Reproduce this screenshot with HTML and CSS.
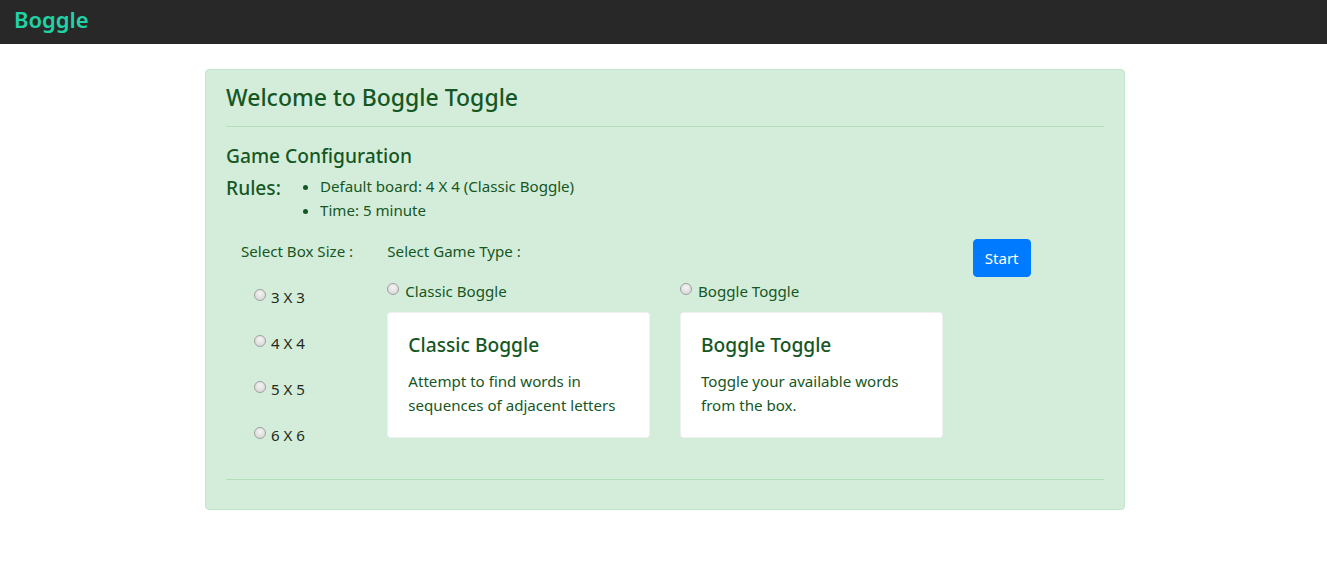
FILE: index.html
```html
<!DOCTYPE html>
<html>
<head>
<meta charset="utf-8">
<title>Boggle</title>
<link rel="stylesheet" href="styles.css">
</head>
<body>
<nav class="navbar"><span class="brand">Boggle</span></nav>
<main class="page">
  <section class="alert">
    <h4 class="title">Welcome to Boggle Toggle</h4>
    <hr class="rule">
    <h5 class="subtitle">Game Configuration</h5>
    <div class="rules">
      <h5 class="rules-label">Rules:</h5>
      <ul class="rules-list">
        <li>Default board: 4 X 4 (Classic Boggle)</li>
        <li>Time: 5 minute</li>
      </ul>
    </div>
    <div class="config">
      <div class="col">
        <div class="col-label">Select Box Size :</div>
        <label class="size"><input type="radio" name="size" class="radio"><span>3 X 3</span></label>
        <label class="size"><input type="radio" name="size" class="radio"><span>4 X 4</span></label>
        <label class="size"><input type="radio" name="size" class="radio"><span>5 X 5</span></label>
        <label class="size"><input type="radio" name="size" class="radio"><span>6 X 6</span></label>
      </div>
      <div class="col">
        <div class="col-label">Select Game Type :</div>
        <label class="type"><input type="radio" name="type" class="radio"><span>Classic Boggle</span></label>
        <div class="card">
          <h5 class="card-title">Classic Boggle</h5>
          <p class="card-text">Attempt to find words in sequences of adjacent letters</p>
        </div>
      </div>
      <div class="col">
        <div class="col-label"></div>
        <label class="type"><input type="radio" name="type" class="radio"><span>Boggle Toggle</span></label>
        <div class="card">
          <h5 class="card-title">Boggle Toggle</h5>
          <p class="card-text">Toggle your available words from the box.</p>
        </div>
      </div>
      <div class="col">
        <button class="btn">Start</button>
      </div>
    </div>
    <hr class="rule rule-bottom">
  </section>
</main>
</body>
</html>
```
FILE: styles.css
```css
* { box-sizing: border-box; }
body {
  margin: 0;
  font-family: "Noto Sans", "Open Sans", sans-serif;
  font-size: 15.1px;
  line-height: 24px;
  color: #212529;
  background: #fff;
}
.navbar {
  height: 44px;
  background: #282828;
  display: flex;
  align-items: center;
  padding: 0 14px;
}
.brand {
  font-size: 22px;
  font-weight: 600;
  color: #1fd3a6;
  line-height: 30px;
  margin-top: -6px;
}
.page {
  display: flex;
  justify-content: center;
  padding-top: 25px;
}
.alert {
  width: 920px;
  margin-left: 3px;
  background: #d4edda;
  border: 1px solid #c3e6cb;
  border-radius: 4px;
  color: #155724;
  padding: 13px 20px 13px;
}
.title {
  margin: 0;
  font-size: 23px;
  font-weight: 500;
  line-height: 29px;
}
.rule {
  border: 0;
  border-top: 1px solid #b1dfbb;
  margin: 14px 0 17px;
}
.subtitle {
  margin: 0;
  font-size: 19.2px;
  font-weight: 500;
  line-height: 24px;
}
.rules {
  display: flex;
  align-items: flex-start;
  margin-top: 8px;
}
.rules-label {
  margin: 0;
  font-size: 19.2px;
  font-weight: 500;
  line-height: 24px;
  width: 54px;
}
.rules-list {
  margin: -2px 0 17px;
  padding-left: 40px;
}
.rules-list li { line-height: 24px; }
.config {
  display: grid;
  grid-template-columns: 146.33px 292.67px 292.67px 146.33px;
}
.col { padding: 0 15px; display: flex; flex-direction: column; align-items: flex-start; }
.col-label { height: 24px; }
.size {
  display: flex;
  align-items: center;
  gap: 5px;
  margin-top: 22px;
  padding-left: 13px;
  color: #1d2b20;
}
.type {
  display: flex;
  align-items: center;
  gap: 6px;
  margin-top: 16px;
  height: 24px;
}
.radio {
  appearance: none;
  -webkit-appearance: none;
  width: 12px;
  height: 12px;
  margin: -4px 0 0 0;
  border-radius: 50%;
  border: 1px solid #a0a0a0;
  background: radial-gradient(circle at 50% 35%, #f4f4f4 0, #dcdcdc 70%, #cfcfcf 100%);
}
.card {
  margin-top: 9px;
  width: 100%;
  background: #fff;
  border: 1px solid rgba(0,0,0,.06);
  border-radius: 4px;
  padding: 20px;
}
.card-title {
  margin: 0 0 12px;
  font-size: 19.2px;
  font-weight: 500;
  line-height: 24px;
}
.card-text { margin: 0; }
.btn {
  height: 38px;
  width: 58px;
  background: #007bff;
  color: #fff;
  border: 1px solid #007bff;
  border-radius: 4px;
  font-family: inherit;
  font-size: 15.1px;
  line-height: 24px;
  padding: 0;
}
.rule-bottom { margin: 32px 0 16px; }
```
